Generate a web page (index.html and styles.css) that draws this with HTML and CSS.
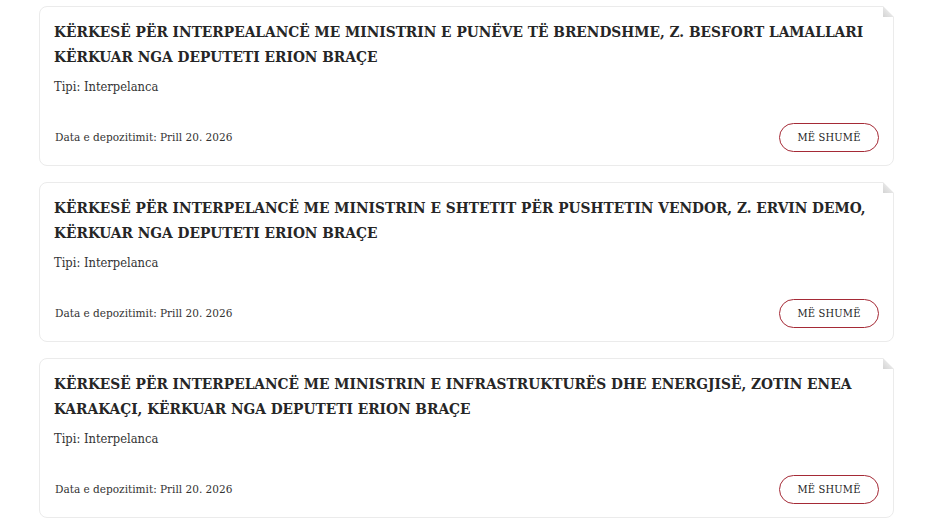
FILE: index.html
```html
<!DOCTYPE html>
<html lang="sq">
<head>
<meta charset="utf-8">
<title>Interpelanca</title>
<link rel="stylesheet" href="styles.css">
</head>
<body>
<main class="list">
  <article class="card">
    <h2 class="card-title">KËRKESË PËR INTERPEALANCË ME MINISTRIN E PUNËVE TË BRENDSHME, Z. BESFORT LAMALLARI KËRKUAR NGA DEPUTETI ERION BRAÇE</h2>
    <p class="card-type">Tipi: Interpelanca</p>
    <div class="card-footer">
      <span class="card-date">Data e depozitimit: Prill 20. 2026</span>
      <a class="btn-more" href="#">MË SHUMË</a>
    </div>
  </article>
  <article class="card">
    <h2 class="card-title">KËRKESË PËR INTERPELANCË ME MINISTRIN E SHTETIT PËR PUSHTETIN VENDOR, Z. ERVIN DEMO, KËRKUAR NGA DEPUTETI ERION BRAÇE</h2>
    <p class="card-type">Tipi: Interpelanca</p>
    <div class="card-footer">
      <span class="card-date">Data e depozitimit: Prill 20. 2026</span>
      <a class="btn-more" href="#">MË SHUMË</a>
    </div>
  </article>
  <article class="card">
    <h2 class="card-title">KËRKESË PËR INTERPELANCË ME MINISTRIN E INFRASTRUKTURËS DHE ENERGJISË, ZOTIN ENEA KARAKAÇI, KËRKUAR NGA DEPUTETI ERION BRAÇE</h2>
    <p class="card-type">Tipi: Interpelanca</p>
    <div class="card-footer">
      <span class="card-date">Data e depozitimit: Prill 20. 2026</span>
      <a class="btn-more" href="#">MË SHUMË</a>
    </div>
  </article>
</main>
</body>
</html>
```
FILE: styles.css
```css
html, body {
  margin: 0;
  padding: 0;
  background: #fff;
}
body {
  font-family: "DejaVu Serif Condensed", "DejaVu Serif", serif;
  color: #333;
}
.list {
  width: 855px;
  margin: 0 0 0 39px;
  padding-top: 6px;
  display: flex;
  flex-direction: column;
  gap: 16px;
}
.card {
  position: relative;
  box-sizing: border-box;
  height: 160px;
  border: 1px solid #ebebeb;
  border-radius: 8px;
  padding: 13px 14px 13px 14px;
  display: flex;
  flex-direction: column;
  background: #fff;
}
.card::after {
  content: "";
  position: absolute;
  top: -1px;
  right: -1px;
  width: 11px;
  height: 11px;
  background: linear-gradient(45deg, #d4d4d4 0%, #e6e6e6 48%, #fff 52%, #fff 100%);
}
.card-title {
  margin: 0;
  font-size: 15.3px;
  line-height: 25px;
  font-weight: bold;
  color: #262626;
}
.card-type {
  margin: 8px 0 0;
  font-size: 12.8px;
  line-height: 18px;
  color: #333;
}
.card-footer {
  margin-top: auto;
  display: flex;
  align-items: center;
  justify-content: space-between;
}
.card-date {
  font-size: 11.7px;
  color: #333;
  margin-top: -2px;
  padding-left: 1px;
}
.btn-more {
  box-sizing: border-box;
  width: 100px;
  height: 29px;
  border: 1px solid #a52a36;
  border-radius: 15px;
  display: flex;
  align-items: center;
  justify-content: center;
  font-size: 11px;
  color: #222;
  text-decoration: none;
  letter-spacing: 0.2px;
}
```
